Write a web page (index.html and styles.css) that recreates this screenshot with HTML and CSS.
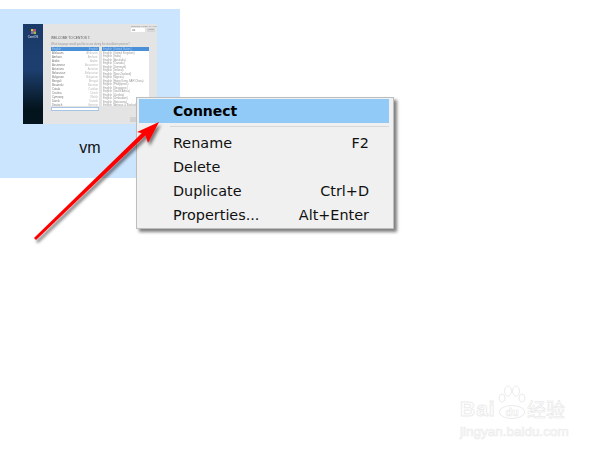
FILE: index.html
```html
<!DOCTYPE html>
<html lang="en">
<head>
    <meta charset="UTF-8">
    <title>vm context menu</title>
    <link rel="stylesheet" href="styles.css">
</head>
<body>
    <div class="tile">
        <div class="thumb">
            <div class="thumb-side">
                <svg class="thumb-logo" viewBox="0 0 6 6" width="5" height="5">
                    <rect x="0" y="0" width="3" height="3" fill="#d8c23c"/>
                    <rect x="3" y="0" width="3" height="3" fill="#b5488f"/>
                    <rect x="0" y="3" width="3" height="3" fill="#9c5fc0"/>
                    <rect x="3" y="3" width="3" height="3" fill="#9cc23e"/>
                </svg>
                <span class="thumb-brand">CentOS</span>
            </div>
            <div class="thumb-main">
                <div class="thumb-top">
                    <span class="thumb-small">CENTOS 7 INSTALLATION</span>
                    <div class="thumb-keys">
                        <span class="thumb-kbd">us</span>
                        <span class="thumb-help">Help!</span>
                    </div>
                </div>
                <div class="thumb-title">WELCOME TO CENTOS 7.</div>
                <div class="thumb-question">What language would you like to use during the installation process?</div>
                <div class="thumb-lists">
                    <div class="thumb-col">
                        <ul class="thumb-list">
                            <li class="on"><span>English</span><span>English</span></li>
                            <li><span>Afrikaans</span><span>Afrikaans</span></li>
                            <li><span>Amharic</span><span>Amharic</span></li>
                            <li><span>Arabic</span><span>Arabic</span></li>
                            <li><span>Assamese</span><span>Assamese</span></li>
                            <li><span>Asturianu</span><span>Asturian</span></li>
                            <li><span>Belarusian</span><span>Belarusian</span></li>
                            <li><span>Bulgarian</span><span>Bulgarian</span></li>
                            <li><span>Bengali</span><span>Bengali</span></li>
                            <li><span>Bosanski</span><span>Bosnian</span></li>
                            <li><span>Catala</span><span>Catalan</span></li>
                            <li><span>Cestina</span><span>Czech</span></li>
                            <li><span>Cymraeg</span><span>Welsh</span></li>
                            <li><span>Dansk</span><span>Danish</span></li>
                            <li><span>Deutsch</span><span>German</span></li>
                        </ul>
                        <div class="thumb-search"></div>
                    </div>
                    <ul class="thumb-list thumb-right">
                        <li class="on"><span>English (United States)</span></li>
                        <li><span>English (United Kingdom)</span></li>
                        <li><span>English (India)</span></li>
                        <li><span>English (Australia)</span></li>
                        <li><span>English (Canada)</span></li>
                        <li><span>English (Denmark)</span></li>
                        <li><span>English (Ireland)</span></li>
                        <li><span>English (New Zealand)</span></li>
                        <li><span>English (Nigeria)</span></li>
                        <li><span>English (Hong Kong SAR China)</span></li>
                        <li><span>English (Philippines)</span></li>
                        <li><span>English (Singapore)</span></li>
                        <li><span>English (South Africa)</span></li>
                        <li><span>English (Zambia)</span></li>
                        <li><span>English (Zimbabwe)</span></li>
                        <li><span>English (Botswana)</span></li>
                        <li><span>English (Antigua &amp; Barbuda)</span></li>
                    </ul>
                </div>
                <div class="thumb-foot"></div>
            </div>
        </div>
        <div class="tile-name">vm</div>
    </div>

    <div class="menu">
        <div class="menu-item active">Connect</div>
        <div class="menu-sep"></div>
        <div class="menu-item"><span>Rename</span><span>F2</span></div>
        <div class="menu-item"><span>Delete</span></div>
        <div class="menu-item"><span>Duplicate</span><span>Ctrl+D</span></div>
        <div class="menu-item"><span>Properties...</span><span>Alt+Enter</span></div>
    </div>

    <!-- red annotation arrow -->
    <svg class="arrow" viewBox="0 0 600 450" width="600" height="450">
        <defs>
            <filter id="arrowShadow" x="-20%" y="-20%" width="140%" height="140%">
                <feDropShadow dx="2" dy="3" stdDeviation="1.5" flood-color="#000" flood-opacity="0.5"/>
            </filter>
        </defs>
        <g filter="url(#arrowShadow)" fill="#fe0000">
            <path d="M34 238 L36 240 L147 134 L144 131 Z"/>
            <path d="M159 122 L137 132 L145 134 L148 143 Z"/>
        </g>
    </svg>

    <div class="watermark">
        <div class="wm-top">
            <span class="wm-bai">Bai</span>
            <div class="wm-logo">
                <svg class="wm-paw" viewBox="0 0 28 20" width="28" height="20">
                    <ellipse cx="4" cy="13" rx="3" ry="4"/>
                    <ellipse cx="10" cy="6" rx="3.5" ry="5"/>
                    <ellipse cx="18" cy="6" rx="3.5" ry="5"/>
                    <ellipse cx="24" cy="13" rx="3" ry="4"/>
                </svg>
                <span class="wm-du">du</span>
            </div>
            <span class="wm-cn">经验</span>
        </div>
        <div class="wm-url">jingyan.baidu.com</div>
    </div>
</body>
</html>
```

FILE: styles.css
```css
* {
    margin: 0;
    padding: 0;
    box-sizing: border-box;
}

body {
    position: relative;
    width: 600px;
    height: 450px;
    overflow: hidden;
    background: white;
    font-family: "DejaVu Sans", sans-serif;
}

.tile {
    width: 180px;
    height: 169px;
    margin-top: 9px;
    padding: 15px 0 0 23px;
    background: #cce5ff;
}

.tile-name {
    width: 134px;
    margin-top: 14px;
    text-align: center;
    font-family: "Liberation Sans", sans-serif;
    font-size: 16px;
    line-height: 20px;
    color: #111;
}

.thumb {
    display: flex;
    width: 134px;
    height: 100px;
    overflow: hidden;
    filter: blur(0.45px);
    font-family: "Liberation Sans", sans-serif;
}

.thumb-side {
    display: flex;
    flex-direction: column;
    align-items: center;
    width: 20px;
    padding-top: 5px;
    background: linear-gradient(#1a3a68, #1d3f70 45%, #04141c 85%);
}

.thumb-logo {
    display: block;
}

.thumb-brand {
    margin-top: 1px;
    font-size: 3px;
    line-height: 4px;
    color: #dfe6ee;
}

.thumb-main {
    flex: 1;
    padding: 1px 2px 0 8px;
    background: #e4e4e4;
}

.thumb-top {
    display: flex;
    flex-direction: column;
    align-items: flex-end;
    height: 9px;
}

.thumb-small {
    width: 24px;
    font-size: 2.2px;
    line-height: 3px;
    white-space: nowrap;
    color: #888;
}

.thumb-keys {
    display: flex;
    gap: 2px;
}

.thumb-kbd {
    width: 14px;
    height: 4px;
    padding-left: 1px;
    background: white;
    font-size: 3px;
    line-height: 4px;
    color: #555;
}

.thumb-help {
    width: 8px;
    height: 4px;
    background: #d6d6d6;
    font-size: 2.5px;
    line-height: 4px;
    text-align: center;
    color: #888;
}

.thumb-title {
    margin-top: 2px;
    font-size: 3.2px;
    line-height: 4px;
    color: #555;
}

.thumb-question {
    margin-top: 3px;
    font-size: 2.6px;
    line-height: 3px;
    white-space: nowrap;
    color: #999;
}

.thumb-lists {
    display: flex;
    gap: 3px;
    margin-top: 1px;
}

.thumb-col {
    width: 48px;
}

.thumb-list {
    height: 59px;
    overflow: hidden;
    list-style: none;
    background: white;
    font-size: 2.8px;
    line-height: 4px;
    color: #777;
}

.thumb-right {
    width: 47px;
    color: #999;
}

.thumb-list li {
    display: flex;
    justify-content: space-between;
    height: 3.5px;
    padding: 0 1px;
    white-space: nowrap;
}

.thumb-col .thumb-list li {
    height: 4px;
}

.thumb-list li span:nth-child(2) {
    color: #bbb;
}

.thumb-list li.on,
.thumb-list li.on span {
    background: #4a90d9;
    color: #a9cbee;
}

.thumb-search {
    height: 4px;
    margin-top: 1px;
    background: white;
    border: 0.5px solid #a9c5e4;
}

.thumb-foot {
    width: 27px;
    height: 5px;
    margin: 6px -2px 0 auto;
    background: #d2d2d2;
}

.menu {
    position: absolute;
    left: 136px;
    top: 97px;
    width: 258px;
    height: 132px;
    padding: 1px 4px 0 2px;
    background: #f0f0f0;
    border: 1px solid #bdbdbd;
    box-shadow: 3px 3px 3px rgba(0, 0, 0, 0.5);
    font-size: 14.4px;
    color: #111;
}

.menu-item {
    display: flex;
    justify-content: space-between;
    height: 24px;
    padding: 0 20px 0 34px;
    line-height: 23px;
    white-space: nowrap;
}

.menu-item.active {
    background: #91c9f7;
    color: black;
    font-size: 14px;
    font-weight: bold;
    line-height: 24px;
}

.menu-sep {
    height: 1px;
    margin: 3px 0 5px 31px;
    background: #d7d7d7;
}

.arrow {
    position: absolute;
    left: 0;
    top: 0;
    pointer-events: none;
}

.watermark {
    position: absolute;
    left: 460px;
    top: 385px;
    width: 108px;
    color: white;
    font-family: "Liberation Sans", sans-serif;
    -webkit-text-stroke: 1px #ececec;
}

.wm-top {
    display: flex;
    align-items: flex-end;
    height: 34px;
}

.wm-bai {
    width: 37px;
    font-size: 21px;
    font-weight: bold;
    line-height: 20px;
    letter-spacing: 1px;
}

.wm-logo {
    display: flex;
    flex-direction: column;
    align-items: center;
    width: 30px;
}

.wm-paw {
    display: block;
    fill: white;
    stroke: #ececec;
}

.wm-du {
    width: 26px;
    height: 14px;
    border: 1px solid #ececec;
    border-radius: 50%;
    font-size: 11px;
    font-weight: bold;
    line-height: 12px;
    text-align: center;
    -webkit-text-stroke: 0.5px #e8e8e8;
}

.wm-cn {
    font-family: "Noto Sans CJK SC", sans-serif;
    font-size: 19px;
    line-height: 20px;
    -webkit-text-stroke: 0.5px #e4e4e4;
}

.wm-url {
    margin-top: 5px;
    font-size: 13.5px;
    line-height: 16px;
    white-space: nowrap;
    -webkit-text-stroke: 0.7px #ececec;
}
```
